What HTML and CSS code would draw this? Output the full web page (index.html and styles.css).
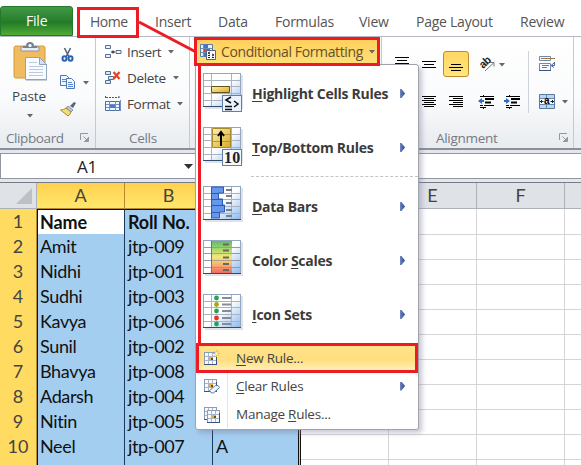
FILE: index.html
```html
<!DOCTYPE html>
<html lang="en">
<head>
<meta charset="utf-8">
<title>Conditional Formatting</title>
<link rel="stylesheet" href="styles.css">
</head>
<body>
<svg class="defs" width="0" height="0">
  <defs>
    <linearGradient id="pane" x1="0" y1="0" x2="1" y2="1"><stop offset=".5" stop-color="#fff"/><stop offset="1" stop-color="#8db8ed"/></linearGradient>
    <linearGradient id="gold" x1="0" y1="0" x2="1" y2="1"><stop offset="0" stop-color="#fff0b0"/><stop offset="1" stop-color="#d8ab20"/></linearGradient>
    <linearGradient id="heat" x1="0" y1="0" x2="0" y2="1"><stop offset="0" stop-color="#5dbb72"/><stop offset=".25" stop-color="#a7d66b"/><stop offset=".5" stop-color="#f4e77c"/><stop offset=".75" stop-color="#f6b06f"/><stop offset="1" stop-color="#ef6a5f"/></linearGradient>
    <g id="grid-big">
      <rect x="2" y="2" width="38" height="34" fill="#c9ced6" opacity=".6"/>
      <rect x=".5" y=".5" width="37" height="33" fill="url(#pane)" stroke="#93a5bf"/>
      <path d="M1 7.500h36M1 13.500h36M1 20.500h36M1 27.500h36M8.500 1v32M28.500 1v32" stroke="#aab2c1" fill="none"/>
      <path d="M0 33.500h38" stroke="#324b70"/>
    </g>
    <g id="grid-small">
      <rect x=".5" y=".5" width="12" height="12" fill="#f7f9fc" stroke="#8c9db6"/>
      <path d="M1 4.500h11M1 8.500h11M4.500 1v11M8.500 1v11" stroke="#a9b6c9"/>
      <path d="M0 12.500h13M12.500 3v10" stroke="#3a5482"/>
      <rect x="5" y="5" width="4" height="3" fill="#e8b43c"/><path d="M7 6h2v2h-2z" fill="#6e4a10"/>
    </g>
    <path id="caret" d="M0 0h6L3 3.500z" fill="#666"/>
    <g id="launcher" fill="none" stroke="#9298a0"><path d="M.5 7V.5H8M3.500 3.500l4 4M8.500 4v4.500H4"/><path d="M5 8h3V5z" fill="#9298a0"/></g>
  </defs>
</svg>
<div class="window">
  <nav class="tabs">
    <span class="file">File</span>
    <span class="home">Home</span>
    <span class="tab">Insert</span><span class="tab">Data</span><span class="tab">Formulas</span><span class="tab">View</span><span class="tab">Page Layout</span><span class="tab">Review</span>
  </nav>
  <section class="ribbon">
    <div class="group clipboard">
      <div class="group-body">
        <div class="paste">
          <svg width="36" height="41" viewBox="0 0 36 41">
            <rect x="1" y="4" width="31" height="32" rx="2" fill="#efbd60" stroke="#d39a38"/>
            <path d="M8 5h18v4H8z" fill="#e9edf2" stroke="#8b95a4"/>
            <path d="M10 6V4h3q0-4 4-4t4 4h3v2z" fill="#77818f"/><circle cx="17" cy="3.500" r="1.600" fill="#fff"/>
            <path d="M13 17h15l6 6v16H13z" fill="#aab1bb" opacity=".6"/>
            <path d="M12.500 15.500h14l7 7v15h-21z" fill="#f8fbff" stroke="#8fa3c0"/>
            <path d="M26.500 15.500v7h7z" fill="#d5e2f4" stroke="#8fa3c0"/>
            <path d="M16 20.500h8M16 24.500h14M16 27.500h14M16 30.500h14M16 33.500h14" stroke="#bcc9dc"/>
          </svg>
          <span>Paste</span>
          <svg width="6" height="4"><use href="#caret"/></svg>
        </div>
        <div class="clip-tools">
          <svg width="16" height="16" viewBox="0 0 16 16"><path d="M4.500 1L9 10M10.500 1L6 10" stroke="#53657f" stroke-width="1.600"/><g fill="none" stroke="#2d62b3" stroke-width="2"><ellipse cx="4.500" cy="11.500" rx="2" ry="2.300"/><ellipse cx="10.500" cy="11.500" rx="2" ry="2.300"/></g></svg>
          <div class="with-caret"><svg width="16" height="15" viewBox="0 0 16 15"><g fill="#eef5ff" stroke="#4e79b4"><path d="M.5.500h6l3 3v7h-9z"/><path d="M6.500 3.500h5l3 3v7h-8z"/></g><path d="M2 4.500h4M2 6.500h4M8 7.500h4M8 9.500h5M8 11.500h5" stroke="#5c8aca"/></svg><svg width="6" height="4"><use href="#caret"/></svg></div>
          <svg width="17" height="15" viewBox="0 0 17 15"><path d="M10 4l4-4 2 1-3 5z" fill="#586781"/><path d="M8 4l5 4-2 2-5-4z" fill="#bdc6d3" stroke="#68758b" stroke-width=".7"/><path d="M6 6l5 4q-1 3-3 4L.5 8Q4 8 6 6z" fill="#f2dc79" stroke="#a88b37"/></svg>
        </div>
      </div>
      <footer><span>Clipboard</span><svg width="9" height="9"><use href="#launcher"/></svg></footer>
    </div>
    <div class="group cells">
      <div class="group-body cell-list">
        <div><svg width="17" height="14" viewBox="0 0 17 14"><g fill="#eaf2fb" stroke="#526f96"><path d="M.5.500h5v3h-5zM.5 9.500h5v3h-5zM11 5.500h5v3h-5z"/></g><path d="M10 7H6m2-1.500v3" stroke="#111"/></svg><span>Insert</span><svg width="6" height="4"><use href="#caret"/></svg></div>
        <div><svg width="17" height="14" viewBox="0 0 17 14"><g fill="#dce9f8" stroke="#526f96"><path d="M.5.500h5v3h-5zM.5 9.500h5v3h-5zM3.500 5.500h5v3h-5z"/></g><path d="M8.500 1l6 7M14.500 1l-6 7" stroke="#e34223" stroke-width="2.200"/></svg><span>Delete</span><svg width="6" height="4"><use href="#caret"/></svg></div>
        <div><svg width="17" height="16" viewBox="0 0 17 16"><path d="M.5 0v3M14 0v3M1 1.500h13" stroke="#405b80" stroke-dasharray="2 1"/><path d="M.5 5.500h14v9H.5z" fill="#f4f8ff" stroke="#4c6f9f"/><path d="M1 8.500h13M1 11.500h13M4.500 5v10M10.500 5v10M15.500 4v11" stroke="#6e91c1"/><path d="M5 9h5v3H5z" fill="#3f7ede"/></svg><span>Format</span><svg width="6" height="4"><use href="#caret"/></svg></div>
      </div>
      <footer><span>Cells</span></footer>
    </div>
    <div class="group styles"></div>
    <div class="group alignment">
      <div class="group-body align-body">
        <div class="align-left">
          <div class="align-row">
            <svg class="i-top" width="15" height="9"><path d="M0 .5h14M2 3.500h10M0 6.500h14" stroke="#000"/></svg>
            <svg class="i-mid" width="15" height="9"><path d="M0 .5h14M2 3.500h10M0 6.500h14" stroke="#000"/></svg>
            <span class="active"><svg width="15" height="9"><path d="M2 .5h10M0 3.500h14M2 6.500h10" stroke="#000"/></svg></span>
            <svg class="i-rot" width="17" height="15" viewBox="0 0 17 15"><text x="0" y="0" font-family="Liberation Sans" font-size="11" font-weight="700" letter-spacing="-.6" fill="#222" transform="translate(4 12) rotate(-42)">ab</text><path d="M6 14L14.500 6M11 5.500h4v4" stroke="#777" fill="none"/></svg>
            <svg class="i-caret" width="6" height="4"><use href="#caret"/></svg>
          </div>
          <div class="align-row second">
            <svg class="i-center" width="15" height="12"><path d="M0 .5h14M2 2.500h10M0 4.500h14M2 6.500h10M0 8.500h14M2 10.500h10" stroke="#000"/></svg>
            <svg class="i-right" width="15" height="12"><path d="M0 .5h14M4 2.500h10M0 4.500h14M4 6.500h10M0 8.500h14M4 10.500h10" stroke="#000"/></svg>
            <svg class="i-out" width="16" height="15"><path d="M2 2.500h3M6 2.500h10M2 11.500h3M6 11.500h10M2 13.500h3M6 13.500h2M5.500 1v2M5.500 13v2" stroke="#000"/><path d="M7 5h9M7 8.500h6" stroke="#000" stroke-width="2"/><path d="M0 7l4-3v2h2v2H4v2z" fill="#2c6cc8"/></svg>
            <svg class="i-in" width="16" height="15"><path d="M2 2.500h3M6 2.500h10M2 11.500h3M6 11.500h10M2 13.500h3M6 13.500h2M5.500 1v2M5.500 13v2" stroke="#000"/><path d="M7 5h9M7 8.500h6" stroke="#000" stroke-width="2"/><path d="M6 7L2 4v2H0v2h2v2z" fill="#2c6cc8"/></svg>
          </div>
        </div>
        <div class="align-right">
          <svg width="17" height="16" viewBox="0 0 17 16"><path d="M.5.500h11v4H.5zM.5 7.500h11v7H.5z" fill="#f5f8fc" stroke="#6e88ae"/><path d="M2 2.500h14M3 9.500h7M3 11.500h5" stroke="#9b7939"/><path d="M15.500 6v3.500H13M15 7l-3 2.500 3 2" fill="none" stroke="#486c9d"/><path d="M0 14.500h12" stroke="#39557f"/></svg>
          <div class="with-caret merge"><svg width="16" height="15" viewBox="0 0 16 15"><path d="M.5.500h15v14H.5z" fill="#bfd4ed" stroke="#5b789f"/><path d="M1 4.500h14M1 10.500h14M7.500 0v4M7.500 11v4" stroke="#6686b0"/><path d="M1 5h14v5H1z" fill="#f7fbff"/><path d="M1 7.500h3.500M11.500 7.500H15M2.500 6v3M13.500 6v3" stroke="#222" fill="none"/><text x="5" y="10" font-family="Liberation Sans" font-size="10" font-weight="700">a</text></svg><svg width="6" height="4"><use href="#caret"/></svg></div>
        </div>
      </div>
      <footer><span>Alignment</span><svg width="9" height="9"><use href="#launcher"/></svg></footer>
    </div>
  </section>
  <section class="formula"><div class="name-box"><span>A1</span><svg width="9" height="5"><path d="M0 0h9L4.500 5z" fill="#333"/></svg></div></section>
  <section class="sheet">
    <div class="row heads"><span class="num"><svg width="17" height="17"><path d="M16 0v16H0z" fill="#bcc1c6"/></svg></span><span class="sel">A</span><span class="sel">B</span><span class="sel"></span><span></span><span>E</span><span>F</span><span></span></div>
    <div class="row first"><span class="num">1</span><b class="cell current">Name</b><b class="cell">Roll No.</b><b class="cell"></b><i></i><i></i><i></i><i></i></div>
    <div class="row"><span class="num">2</span><span class="cell">Amit</span><span class="cell">jtp-009</span><span class="cell"></span><i></i><i></i><i></i><i></i></div>
    <div class="row"><span class="num">3</span><span class="cell">Nidhi</span><span class="cell">jtp-001</span><span class="cell"></span><i></i><i></i><i></i><i></i></div>
    <div class="row"><span class="num">4</span><span class="cell">Sudhi</span><span class="cell">jtp-003</span><span class="cell"></span><i></i><i></i><i></i><i></i></div>
    <div class="row"><span class="num">5</span><span class="cell">Kavya</span><span class="cell">jtp-006</span><span class="cell"></span><i></i><i></i><i></i><i></i></div>
    <div class="row"><span class="num">6</span><span class="cell">Sunil</span><span class="cell">jtp-002</span><span class="cell"></span><i></i><i></i><i></i><i></i></div>
    <div class="row"><span class="num">7</span><span class="cell">Bhavya</span><span class="cell">jtp-008</span><span class="cell"></span><i></i><i></i><i></i><i></i></div>
    <div class="row"><span class="num">8</span><span class="cell">Adarsh</span><span class="cell">jtp-004</span><span class="cell"></span><i></i><i></i><i></i><i></i></div>
    <div class="row"><span class="num">9</span><span class="cell">Nitin</span><span class="cell">jtp-005</span><span class="cell"></span><i></i><i></i><i></i><i></i></div>
    <div class="row"><span class="num">10</span><span class="cell">Neel</span><span class="cell">jtp-007</span><span class="cell">A</span><i></i><i></i><i></i><i></i></div>
    <div class="row"><span class="num"></span><span class="cell"></span><span class="cell"></span><span class="cell"></span><i></i><i></i><i></i><i></i></div>
  </section>

  <div class="menu">
    <div class="big"><svg width="40" height="42" viewBox="0 0 40 42"><use href="#grid-big"/><path d="M8.500 13.500h18v6h-18z" fill="url(#gold)" stroke="#62521d"/><rect x="19.500" y="22.500" width="19" height="16" fill="#eaf3ff" stroke="#637fa8"/><path d="M28 24l-5 3 5 3M31 28l4 3-4 3M22 33.500h7M22 36.500h7" fill="none" stroke="#111" stroke-width="1.500"/></svg><span><u>H</u>ighlight Cells Rules</span><em></em></div>
    <div class="big"><svg width="40" height="42" viewBox="0 0 40 42"><use href="#grid-big"/><path d="M9.500 1.500h18v19h-18z" fill="url(#gold)" stroke="#a88b31"/><path d="M9 7.500h18M9 14.500h18" stroke="#ad9446"/><path d="M18 19V6M15 9l3-4 3 4" fill="none" stroke="#000" stroke-width="2"/><rect x="19.500" y="22.500" width="19" height="16" fill="#f5f9ff" stroke="#637fa8"/><text x="21" y="36" font-family="Liberation Serif" font-size="16" font-weight="700" textLength="16" fill="#222">10</text></svg><span><u>T</u>op/Bottom Rules</span><em></em></div>
    <hr>
    <div class="big"><svg width="40" height="42" viewBox="0 0 40 42"><use href="#grid-big"/><path d="M8.500 1h12v6h-5v6h4v6h2v7h-5v6h-8z" fill="#6797eb" stroke="#285bb5"/><path d="M9 7.500h7M9 13.500h10M9 19.500h13M9 26.500h8" stroke="#285bb5"/><path d="M23 4h6M23 10h6M23 17h6M23 24h6M23 30h6" stroke="#777f8a" stroke-width="2"/></svg><span><u>D</u>ata Bars</span><em></em></div>
    <div class="big"><svg width="40" height="42" viewBox="0 0 40 42"><use href="#grid-big"/><rect x="9" y="1" width="20" height="32" fill="url(#heat)"/><path d="M1 7.500h36M1 13.500h36M1 20.500h36M1 27.500h36" stroke="#8c929c" opacity=".7"/><path d="M8.500 1v32" stroke="#66758d"/><path d="M20 4.500h6M20 10.500h6M20 17.500h6M20 24h6M20 30h6" stroke="#6d6958" stroke-width="2"/></svg><span>Color <u>S</u>cales</span><em></em></div>
    <div class="big last"><svg width="40" height="42" viewBox="0 0 40 42"><use href="#grid-big"/><circle cx="13.500" cy="4" r="2.400" fill="#23a35a"/><circle cx="13.500" cy="10.500" r="2.400" fill="#a8a614"/><circle cx="13.500" cy="17" r="2.400" fill="#23a35a"/><circle cx="13.500" cy="24" r="2.400" fill="#ed2d28"/><circle cx="13.500" cy="30" r="2.400" fill="#23a35a"/><path d="M19 4h9M19 10.500h9M19 17h9M19 24h9M19 30h9" stroke="#858c98" stroke-width="2"/></svg><span><u>I</u>con Sets</span><em></em></div>
    <div class="small new"><svg width="17" height="16"><use href="#grid-small" y="2"/><path d="M12.500 0v7M9 3.500h7M10 1l5 5M15 1l-5 5" stroke="#e8c33a"/><circle cx="12.500" cy="3.500" r="1.500" fill="#fff0a0"/></svg><span><u>N</u>ew Rule...</span></div>
    <div class="plain">
      <div class="small"><svg width="17" height="16"><use href="#grid-small"/><path d="M5.500 11.500l6-5q3-1 4 2l-6 5.500q-3 .5-4-2.500z" fill="#f1f6fd" stroke="#617da5"/></svg><span><u>C</u>lear Rules</span><em></em></div>
      <div class="small"><svg width="17" height="16"><use href="#grid-small"/><use href="#grid-small" x="3" y="3"/></svg><span>Manage <u>R</u>ules...</span></div>
    </div>
  </div>
  <div class="cond"><svg width="16" height="16" viewBox="0 0 16 16"><path d="M.5.500h12v12H.5z" fill="#eaf1fa" stroke="#5d7ba7"/><path d="M1 4.500h11M1 8.500h11M3.500 1v12" stroke="#6e8ab2"/><path d="M4 1h4v3H4zM4 9h3v3H4z" fill="#3b77cf"/><path d="M4 5h6v3H4z" fill="#e14531"/><path d="M6.500 6.500h9v9h-9z" fill="#f6f8fc" stroke="#4d6387"/><path d="M10 8l-2 1 2 1M12 10l2 1-2 1M8 11.500h2M8 13.500h2M12 13.500h2" stroke="#222" fill="none"/></svg><span>Conditional Formatting</span><svg width="6" height="4"><use href="#caret"/></svg></div>
  <svg class="callouts" width="581" height="465" fill="none" stroke="#ed1c24"><path d="M139 22L196 52" stroke-width="3"/><path d="M199.500 63V345" stroke-width="3"/><rect x="78.500" y="8.500" width="59" height="28" stroke-width="3"/></svg>
</div>
</body>
</html>
```
FILE: styles.css
```css
*{box-sizing:border-box}
body{margin:0;width:581px;height:465px;overflow:hidden;background:#fff;font:14px "Open Sans",sans-serif;color:#444}
svg{display:block;flex:none}
.defs{position:absolute}
.window{position:relative;width:581px;height:465px;overflow:hidden}
span,b{white-space:nowrap}
.tabs{height:37px;position:relative;border-bottom:1px solid #b5b9c3;display:grid;grid-template-columns:73px 82px 63px 57px 84px 57px 104px 61px;line-height:19px;padding-top:6px;color:#555}
.file{height:30px;padding:4px 0 0 25px;color:#fff;letter-spacing:-.2px;background:linear-gradient(#439847,#237b28 55%,#4fab35);border:1px solid #217a27;border-radius:3px 3px 0 0}
.home{padding:6px 0 0 17px;letter-spacing:-.45px}
.tab{padding-top:6px;letter-spacing:-.25px}
.ribbon{display:flex;background:linear-gradient(#fff,#fafbfc 55%,#e9ecf0 97%);border-bottom:2px solid #8b9098;height:113px;font-size:13.5px;letter-spacing:-.3px}
.group{display:flex;flex-direction:column;border-right:1px solid #c6cad0;height:111px}
.group footer{display:flex;height:21px;line-height:20px;color:#747b86;align-items:center}
.group-body{height:90px;display:flex}
.clipboard{width:96px}.clipboard footer{padding-left:6px;gap:15px}
.clipboard footer span{width:59px;letter-spacing:-.4px}
.cells{width:94px}.cells footer{padding-left:33px}
.styles{width:192px}.alignment{width:192px}
.alignment footer{padding-left:54px;gap:60px}
.alignment footer span{width:63px}
.paste{width:55px;padding:5px 0 0 13px;line-height:20px}
.paste span{display:block;margin:3px 0 0 -1px;letter-spacing:-.1px}
.paste>svg:last-child{margin:8px 0 0 14px}
.clip-tools{padding:10px 0 0 5px;display:flex;flex-direction:column;gap:12px}
.with-caret{display:flex;align-items:center;gap:7px}
.cell-list{flex-direction:column;padding:5px 0 0 9px;gap:6px}
.cell-list>div{display:flex;align-items:center;height:20px;gap:5px}
.cell-list span{letter-spacing:-.35px}
.cell-list>div>svg:last-child{margin-left:2px}
.align-left{width:147px;border-right:1px solid #cfd2d8;margin-top:14px;height:62px}
.align-row{height:27px;display:flex;align-items:flex-start}
.i-top{margin:6px 0 0 13px}.i-mid{margin:10px 0 0 12px}
.active{width:26px;height:26px;margin-left:6px;border:1px solid #bd8b2c;border-radius:3px;background:linear-gradient(#ffd663,#fee67b);padding:12px 0 0 5px}
.i-rot{margin:6px 0 0 10px;overflow:visible}.i-caret{margin:12px 0 0 3px}
.second{padding-top:18px}.i-center{margin-left:40px}.i-right{margin-left:12px}.i-out{margin:-2px 0 0 14px}.i-in{margin:-2px 0 0 10px}
.align-right{padding:19px 0 0 10px}.merge{margin-top:22px}
.formula{height:33px;background:#e4e8ee;border-bottom:1px solid #777c84;padding:3px 0 4px}
.name-box{height:26px;border:1px solid #92979f;border-right:0;background:#fff;display:flex;align-items:center;color:#222;padding-left:76px}
.name-box span{width:107px;font-size:17px;line-height:22px;letter-spacing:-.2px;padding-top:2px}
.sheet{font:18px Lato,sans-serif;color:#111}
.row{height:25px;display:grid;grid-template-columns:37px 88px 88px 88px 88px 88px 88px 88px;line-height:25px}
.num{background:#ffdb61;border-right:1px solid #b38b30;border-bottom:1px solid #bf912e;text-align:center;color:#444}
.cell{background:#a4cef0;border-right:1px solid #183a5b;border-bottom:1px solid #183a5b;padding-left:3px;letter-spacing:-.35px;line-height:24px}
.cell:nth-child(4){border-right:3px double #111}
.row i{border-right:1px solid #d4d5d7;border-bottom:1px solid #d4d5d7}
.cell.current{background:#fff}
.num+.cell{box-shadow:inset 1px 0 #111}
.first .cell{border-top:1px solid #111;letter-spacing:-.15px}
.heads{height:26px;background:#dfe2e7;text-align:center;color:#444}
.heads>span{border-right:1px solid #adb2b9;border-bottom:1px solid #adb2b9}
.heads>.sel{background:linear-gradient(#ffd04d,#ffe86d);border-right-color:#b98a2d;border-bottom-color:#b98a2d}
.heads .num{background:#dfe2e7;padding:5px 0 0 16px}
.menu{position:absolute;left:195px;top:64px;width:224px;height:366px;background:#fff;border:1px solid #a0a3ab;border-radius:0 3px 3px 3px;box-shadow:3px 3px 5px #77749466;padding-top:8px}
.big{height:54px;display:flex;align-items:flex-start;padding-left:7px;color:#3b3b3b;font-weight:700;letter-spacing:-.27px}
.big.last{height:48px}
.big span{margin-left:9px;margin-top:11px;line-height:20px;width:148px}
hr~.big>*{position:relative;top:-1px}
u{text-decoration:underline;text-underline-offset:2px;text-decoration-thickness:1px}
em{width:5px;height:9px;background:linear-gradient(90deg,#6f87cd,#34456e);clip-path:polygon(0 0,30% 0,100% 50%,30% 100%,0 100%);margin-top:16px}
hr{border:0;border-top:1px dashed #c4c4c4;margin:-5px 0 10px 55px;height:1px}
.small{height:28px;display:flex;align-items:center;padding-left:8px;font-size:13.5px;letter-spacing:-.25px}
.small span{margin:-2px 0 0 15px;width:164px}
.small em{margin-top:-2px}
.new{height:30px;border:3px solid #ed1c24;background:linear-gradient(#ffe28a,#ffdf80 60%,#fff0b8);padding-left:5px}
.new span{margin-top:0}
.plain{background:linear-gradient(#e2e4e7,#e2e4e7) 31px 0/1px 55px no-repeat}
.cond{position:absolute;left:194px;top:37px;width:186px;height:29px;border:3px solid #ed1c24;background:linear-gradient(#ffd15c,#fedf78);display:flex;align-items:center;padding-left:3px;color:#654f2b}
.cond span{margin-left:5px;width:148px;letter-spacing:-.38px}
.callouts{position:absolute;left:0;top:0}
```
